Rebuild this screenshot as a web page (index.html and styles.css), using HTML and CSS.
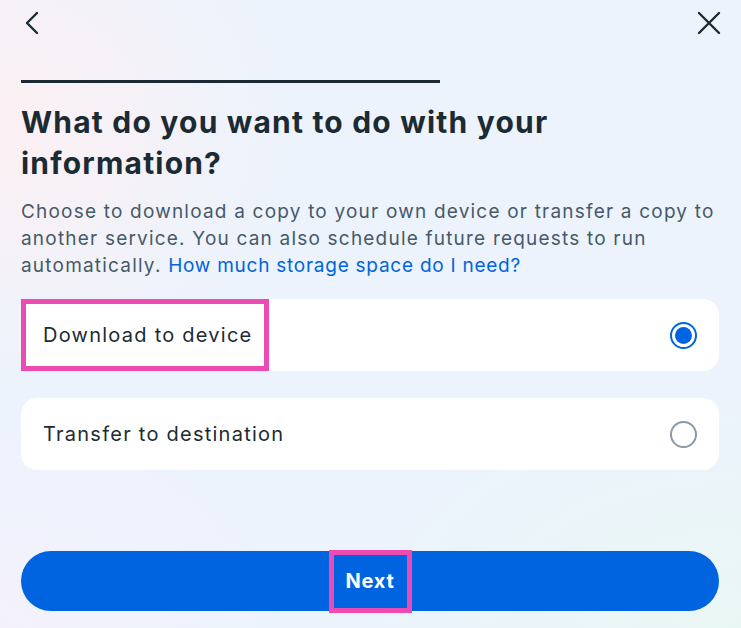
FILE: index.html
```html
<!DOCTYPE html>
<html lang="en">
<head>
<meta charset="utf-8">
<title>Download your information</title>
<link rel="stylesheet" href="styles.css">
</head>
<body>
<div class="page">
  <div class="topbar">
    <button class="icon-btn" aria-label="Back">
      <svg width="16" height="24" viewBox="0 0 16 24"><path d="M13 2 L3 12 L13 22" fill="none" stroke="#1c2b33" stroke-width="2.4" stroke-linecap="round" stroke-linejoin="round"/></svg>
    </button>
    <button class="icon-btn" aria-label="Close">
      <svg width="24" height="24" viewBox="0 0 24 24"><path d="M2 2 L22 22 M22 2 L2 22" fill="none" stroke="#1c2b33" stroke-width="2.4" stroke-linecap="round"/></svg>
    </button>
  </div>
  <div class="progress"><div class="progress-fill"></div></div>
  <h1 class="title">What do you want to do with your information?</h1>
  <p class="desc">Choose to download a copy to your own device or transfer a copy to another service. You can also schedule future requests to run automatically. <a class="link" href="#">How much storage space do I need?</a></p>
  <div class="options">
    <label class="option">
      <span class="option-label highlight">Download to device</span>
      <span class="radio checked"></span>
    </label>
    <label class="option">
      <span class="option-label">Transfer to destination</span>
      <span class="radio"></span>
    </label>
  </div>
  <div class="footer">
    <button class="next-btn"><span class="next-label">Next</span></button>
  </div>
</div>
</body>
</html>
```
FILE: styles.css
```css
* { box-sizing: border-box; }
html, body { margin: 0; padding: 0; height: 100%; }
body {
  font-family: "Inter", "Noto Sans", sans-serif;
  color: #1c2b33;
  background:
    radial-gradient(ellipse 420px 380px at 0% 20%, rgba(253, 240, 243, 0.95), rgba(253, 240, 243, 0) 70%),
    radial-gradient(ellipse 500px 300px at 100% 100%, rgba(233, 247, 244, 1), rgba(233, 247, 244, 0) 75%),
    radial-gradient(ellipse 400px 300px at 0% 100%, rgba(244, 241, 252, 1), rgba(244, 241, 252, 0) 75%),
    #ecf3fc;
  overflow: hidden;
}
.page {
  height: 628px;
  display: flex;
  flex-direction: column;
  padding: 12px 22px 17px 21px;
}
.topbar {
  display: flex;
  justify-content: space-between;
  align-items: center;
  height: 22px;
}
.icon-btn {
  border: 0;
  background: none;
  padding: 0;
  display: flex;
  align-items: center;
  cursor: pointer;
}
.icon-btn:first-child { margin-left: 3px; }
.icon-btn:last-child { margin-right: -2px; }
.progress {
  margin-top: 46px;
  height: 3px;
  width: 100%;
}
.progress-fill {
  width: 419px;
  height: 3px;
  background: #1c2b33;
}
.title {
  margin: 19px 0 0;
  font-size: 30px;
  line-height: 41px;
  font-weight: 700;
  letter-spacing: 1.2px;
  max-width: 620px;
}
.desc {
  margin: 14px 0 0;
  font-size: 19px;
  line-height: 27px;
  letter-spacing: 1.2px;
  color: #465a69;
}
.link { color: #0064e0; text-decoration: none; letter-spacing: 0.75px; }
.options {
  margin-top: 20px;
  display: flex;
  flex-direction: column;
  gap: 27px;
}
.option {
  background: #fff;
  border-radius: 16px;
  height: 72px;
  display: flex;
  align-items: center;
  justify-content: space-between;
  padding-right: 22px;
  font-size: 20px;
  letter-spacing: 1.25px;
  color: #1c2b33;
}
.option-label {
  height: 100%;
  display: flex;
  align-items: center;
  padding-left: 22px;
  padding-right: 22px;
}
.highlight {
  border: 5px solid #ec4bb4;
  padding-left: 17px;
  padding-right: 0;
  width: 248px;
}
.radio {
  width: 27px;
  height: 27px;
  border-radius: 50%;
  border: 2.5px solid #8a99a6;
  position: relative;
}
.radio.checked {
  border-color: #0064e0;
}
.radio.checked::after {
  content: "";
  position: absolute;
  inset: 3px;
  border-radius: 50%;
  background: #0064e0;
}
.footer {
  margin-top: auto;
}
.next-btn {
  width: 100%;
  height: 60px;
  border: 0;
  border-radius: 30px;
  background: #0064e0;
  display: flex;
  align-items: center;
  justify-content: center;
  font-family: inherit;
  padding: 0;
}
.next-label {
  color: #fff;
  font-size: 20px;
  font-weight: 700;
  letter-spacing: 0.8px;
  border: 5px solid #ec4bb4;
  height: 63px;
  width: 83px;
  display: flex;
  align-items: center;
  justify-content: center;
}
```
